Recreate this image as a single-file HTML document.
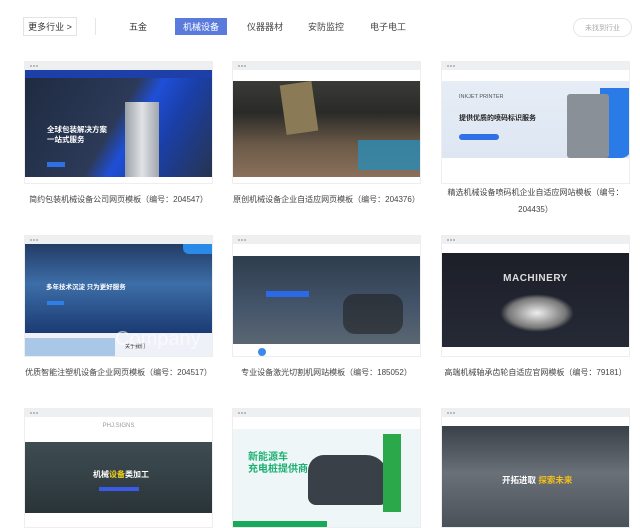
<!DOCTYPE html>
<html><head><meta charset="utf-8"><style>
*{margin:0;padding:0;box-sizing:border-box}
body{width:640px;height:516px;overflow:hidden;background:#fff;font-family:"Liberation Sans","Noto Sans CJK SC",sans-serif;position:relative;color:#333}
.a{position:absolute}
.btn{font-size:9px;display:flex;align-items:center;justify-content:center;white-space:nowrap}
.card{position:absolute;width:189px;border:1px solid #eee;background:#fff;overflow:hidden}
.bar{height:8px;background:#eeeff1;position:relative}
.bar:before{content:"";position:absolute;left:5px;top:3px;width:2px;height:2px;background:#bbb;box-shadow:3px 0 #bbb,6px 0 #bbb}
.img{position:relative;overflow:hidden}
.t{position:absolute;font-size:8px;color:#444;text-align:center;width:209px;line-height:17px;white-space:nowrap}
</style></head><body>
<div class="a btn" style="left:23px;top:17px;width:54px;height:19px;border:1px solid #e3e3e3;color:#333">更多行业 &gt;</div>
<div class="a" style="left:95px;top:18px;width:1px;height:17px;background:#e6e6e6"></div>
<div class="a btn" style="left:123px;top:18px;width:30px;height:17px">五金</div>
<div class="a btn" style="left:175px;top:18px;width:52px;height:17px;background:#5b7bdc;color:#fff">机械设备</div>
<div class="a btn" style="left:243px;top:18px;width:44px;height:17px;color:#444">仪器器材</div>
<div class="a btn" style="left:304px;top:18px;width:44px;height:17px;color:#444">安防监控</div>
<div class="a btn" style="left:366px;top:18px;width:44px;height:17px;color:#444">电子电工</div>
<div class="a btn" style="left:573px;top:18px;width:59px;height:19px;border:1px solid #e6e6e6;border-radius:10px;color:#aaa;font-size:7px">未找到行业</div>

<!-- row1 -->
<div class="card" style="left:24px;top:61px;height:123px"><div class="bar"></div>
<div class="img" style="height:107px;background:linear-gradient(120deg,#1e2a40 0%,#2c3a58 48%,#1f4fd8 58%,#1a3fa8 72%,#27344f 100%)">
<div class="a" style="left:0;top:0;width:100%;height:8px;background:#1e3fa8"></div>
<div class="a" style="left:22px;top:55px;color:#fff;font-size:7.5px;font-weight:bold;line-height:10px">全球包装解决方案<br>一站式服务</div>
<div class="a" style="left:22px;top:92px;width:18px;height:5px;background:#2f6fe8"></div>
<div class="a" style="left:100px;top:32px;width:34px;height:75px;background:linear-gradient(90deg,#9aa0a8,#e0e2e6,#a0a6ae)"></div></div></div>

<div class="card" style="left:232px;top:61px;height:123px"><div class="bar"></div>
<div class="img" style="height:107px;background:linear-gradient(180deg,#fff 0,#fff 11px,#3a3a36 11px,#2a2a28 40%,#6b5a48 70%,#8a705a 100%)">
<div class="a" style="left:50px;top:13px;width:32px;height:50px;background:#8a7a55;transform:rotate(-8deg)"></div>
<div class="a" style="left:125px;top:70px;width:64px;height:30px;background:#2f8ab0;opacity:.85"></div></div></div>

<div class="card" style="left:441px;top:61px;height:123px"><div class="bar"></div>
<div class="img" style="height:107px;background:linear-gradient(180deg,#fff 0,#fff 11px,#e6edf6 11px,#dde6f2 88px,#fff 88px)">
<div class="a" style="left:17px;top:24px;font-size:5.5px;color:#555">INKJET PRINTER</div>
<div class="a" style="left:17px;top:43px;font-size:7px;color:#222;font-weight:bold">提供优质的喷码标识服务</div>
<div class="a" style="left:17px;top:64px;width:40px;height:6px;background:#2f6fe8;border-radius:3px"></div>
<div class="a" style="left:158px;top:18px;width:31px;height:70px;background:#2a7ae8;border-radius:0 0 10px 0"></div>
<div class="a" style="left:125px;top:24px;width:42px;height:64px;background:#8a9098;border-radius:3px"></div></div></div>

<div class="t" style="left:14px;top:191px">简约包装机械设备公司网页模板（编号：204547）</div>
<div class="t" style="left:222px;top:191px">原创机械设备企业自适应网页模板（编号：204376）</div>
<div class="t" style="left:431px;top:184px;white-space:normal">精选机械设备喷码机企业自适应网站模板（编号：<br>204435）</div>

<!-- row2 -->
<div class="card" style="left:24px;top:235px;height:122px"><div class="bar"></div>
<div class="img" style="height:113px;background:linear-gradient(180deg,#233c66 0,#3d6ea8 40px,#1b3a72 89px,#eef2f8 89px)">
<div class="a" style="left:158px;top:0;width:31px;height:10px;background:#2a8ae8;border-radius:0 0 0 6px"></div>
<div class="a" style="left:21px;top:37px;color:#fff;font-size:6.5px;font-weight:bold">多年技术沉淀 只为更好服务</div>
<div class="a" style="left:22px;top:57px;width:17px;height:4px;background:#2f7fe8"></div>
<div class="a" style="left:0;top:94px;width:90px;height:20px;background:#a9c8e8"></div>
<div class="a" style="left:100px;top:99px;font-size:5px;color:#333">关于我们</div>
<div class="a" style="left:90px;top:84px;color:#fff;font-size:20px;opacity:.6">Company</div></div></div>

<div class="card" style="left:232px;top:235px;height:122px"><div class="bar"></div>
<div class="img" style="height:113px;background:linear-gradient(180deg,#fff 0,#fff 12px,#2e3d4c 12px,#44546a 55%,#5a6672 100px,#fff 100px)">
<div class="a" style="left:33px;top:47px;width:43px;height:6px;background:#2a6ae8"></div>
<div class="a" style="left:110px;top:50px;width:60px;height:40px;background:#222;border-radius:12px;opacity:.6"></div>
<div class="a" style="left:25px;top:104px;width:8px;height:8px;background:#3a8ae8;border-radius:50%"></div></div></div>

<div class="card" style="left:441px;top:235px;height:122px"><div class="bar"></div>
<div class="img" style="height:113px;background:linear-gradient(180deg,#fff 0,#fff 9px,#1c1f28 9px,#262a36 103px,#fff 103px)">
<div class="a" style="left:0;top:29px;width:187px;text-align:center;color:#ddd;font-size:10px;font-weight:bold;letter-spacing:.5px">MACHINERY</div>
<div class="a" style="left:58px;top:50px;width:74px;height:38px;background:radial-gradient(#eee,#777 55%,transparent 70%)"></div></div></div>

<div class="t" style="left:14px;top:364px">优质智能注塑机设备企业网页模板（编号：204517）</div>
<div class="t" style="left:222px;top:364px">专业设备激光切割机网站模板（编号：185052）</div>
<div class="t" style="left:431px;top:364px">高端机械轴承齿轮自适应官网模板（编号：79181）</div>

<!-- row3 -->
<div class="card" style="left:24px;top:408px;height:120px"><div class="bar"></div>
<div class="img" style="height:112px;background:linear-gradient(180deg,#fff 0,#fff 25px,#3e4d52 25px,#2a3438 96px,#fff 96px)">
<div class="a" style="left:0;top:6px;width:187px;text-align:center;font-size:6px;color:#999">PHJ.SIGNS</div>
<div class="a" style="left:68px;top:52px;color:#fff;font-size:8px;font-weight:bold">机械<span style="color:#f3d21a">设备</span>类加工</div>
<div class="a" style="left:74px;top:70px;width:40px;height:4px;background:#3a5ae8"></div></div></div>

<div class="card" style="left:232px;top:408px;height:120px"><div class="bar"></div>
<div class="img" style="height:112px;background:linear-gradient(180deg,#fff 0,#fff 12px,#eef6f8 12px)">
<div class="a" style="left:15px;top:35px;color:#1ab070;font-size:10px;font-weight:bold;line-height:12px">新能源车<br>充电桩提供商</div>
<div class="a" style="left:75px;top:38px;width:80px;height:50px;background:#3a4048;border-radius:16px 22px 8px 8px"></div>
<div class="a" style="left:150px;top:17px;width:18px;height:78px;background:#2aa84a"></div>
<div class="a" style="left:0;top:104px;width:94px;height:12px;background:#1aa85a"></div></div></div>

<div class="card" style="left:441px;top:408px;height:120px"><div class="bar"></div>
<div class="img" style="height:112px;background:linear-gradient(180deg,#fff 0,#fff 9px,#3a4048 9px,#6a7078 50%,#4a5058 100%)">
<div class="a" style="left:60px;top:57px;color:#fff;font-size:8.5px;font-weight:bold">开拓进取 <span style="color:#f3c01a">探索未来</span></div></div></div>
</body></html>
